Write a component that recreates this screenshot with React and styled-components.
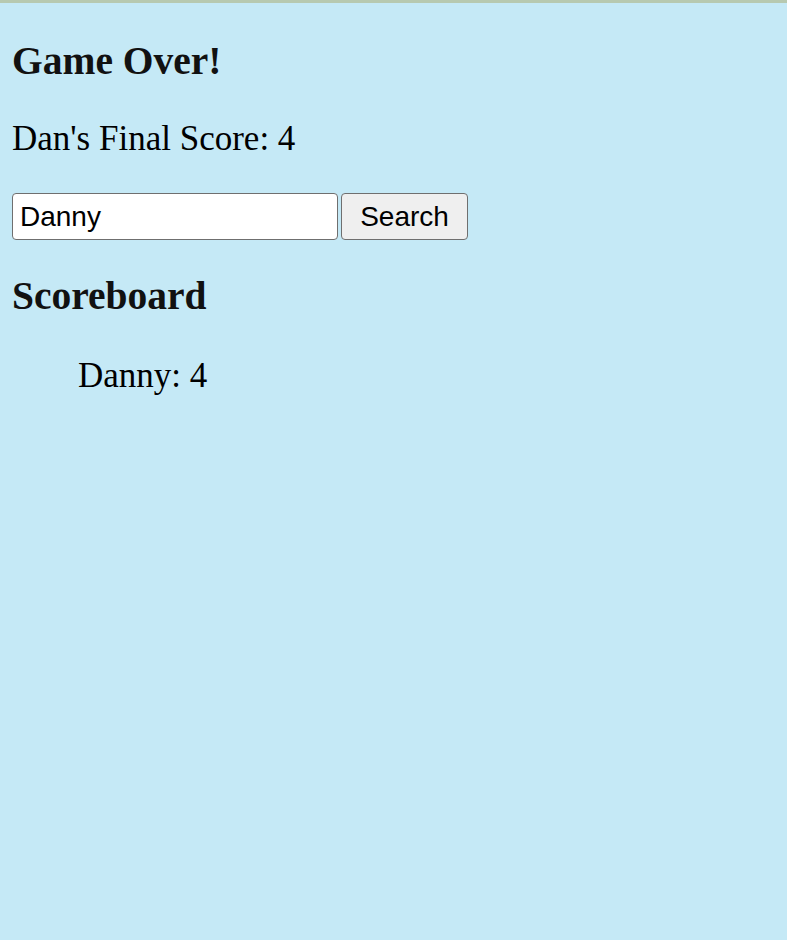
import React from "react";
import styled, { createGlobalStyle } from "styled-components";

const GlobalStyle = createGlobalStyle`
  html, body {
    margin: 0;
    padding: 0;
    background-color: #c5e9f6;
  }
  body {
    border-top: 3px solid #b7c9b0;
    min-height: 937px;
    font-family: "Liberation Serif", "Times New Roman", serif;
    color: #000;
  }
`;

const Page = styled.div`
  padding: 1px 12px 0;
`;

const Heading = styled.h2`
  font-size: 39.5px;
  line-height: 46px;
  font-weight: bold;
  color: #111;
  margin: ${({ top }) => top}px 0 0;
`;

const Message = styled.p`
  font-size: 35px;
  line-height: 40px;
  margin: 35px 0 0;
`;

const SearchForm = styled.form`
  display: flex;
  align-items: center;
  gap: 3px;
  margin-top: 34px;
`;

const SearchInput = styled.input`
  box-sizing: border-box;
  width: 326px;
  height: 47px;
  padding: 0 8px 0 7px;
  border: 1.5px solid #6f6f6f;
  border-radius: 4px;
  background: #fff;
  font-family: "Liberation Sans", Arial, sans-serif;
  font-size: 28px;
  color: #000;
  outline: none;
`;

const SearchButton = styled.button`
  box-sizing: border-box;
  width: 127px;
  height: 47px;
  padding: 0 18px;
  border: 1.5px solid #6f6f6f;
  border-radius: 4px;
  background: #efefef;
  font-family: "Liberation Sans", Arial, sans-serif;
  font-size: 28px;
  color: #000;
`;

const ScoreList = styled.ul`
  list-style: none;
  margin: 37px 0 0;
  padding-left: 66px;
`;

const ScoreItem = styled.li`
  font-size: 35px;
  line-height: 40px;
`;

const scores = [{ name: "Danny", score: 4 }];

export default function App() {
  return (
    <>
      <GlobalStyle />
      <Page>
        <Heading top={34}>Game Over!</Heading>
        <Message>Dan's Final Score: 4</Message>
        <SearchForm onSubmit={(e) => e.preventDefault()}>
          <SearchInput type="text" defaultValue="Danny" />
          <SearchButton type="submit">Search</SearchButton>
        </SearchForm>
        <Heading top={33}>Scoreboard</Heading>
        <ScoreList>
          {scores.map((s) => (
            <ScoreItem key={s.name}>
              {s.name}: {s.score}
            </ScoreItem>
          ))}
        </ScoreList>
      </Page>
    </>
  );
}
